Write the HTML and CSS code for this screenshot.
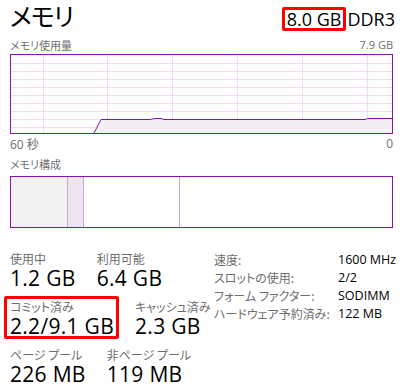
FILE: index.html
```html
<!DOCTYPE html>
<html lang="ja">
<head>
<meta charset="utf-8">
<title>メモリ</title>
<link rel="stylesheet" href="styles.css">
</head>
<body>
<div class="page">
  <div class="head">
    <h1 class="title">メモリ</h1>
    <div class="spec"><span class="mark">8.0 GB</span>DDR3</div>
  </div>

  <div class="axis axis-top"><span class="jp">メモリ使用量</span><span>7.9 GB</span></div>
  <div class="graph">
    <svg width="381" height="78" viewBox="0 0 381 78">
      <g stroke="#eedcf2" stroke-width="1">
        <line x1="0" y1="8.5" x2="381" y2="8.5"/>
        <line x1="0" y1="16.5" x2="381" y2="16.5"/>
        <line x1="0" y1="24.5" x2="381" y2="24.5"/>
        <line x1="0" y1="32.5" x2="381" y2="32.5"/>
        <line x1="0" y1="40.5" x2="381" y2="40.5"/>
        <line x1="0" y1="48.5" x2="381" y2="48.5"/>
        <line x1="0" y1="56.5" x2="381" y2="56.5"/>
        <line x1="0" y1="64.5" x2="381" y2="64.5"/>
        <line x1="0" y1="72.5" x2="381" y2="72.5"/>
        <line x1="32.5" y1="0" x2="32.5" y2="78"/>
        <line x1="96.5" y1="0" x2="96.5" y2="78"/>
        <line x1="161.5" y1="0" x2="161.5" y2="78"/>
        <line x1="226.5" y1="0" x2="226.5" y2="78"/>
        <line x1="291.5" y1="0" x2="291.5" y2="78"/>
        <line x1="356.5" y1="0" x2="356.5" y2="78"/>
      </g>
      <polygon points="83,78 90,64.5 139,64.5 144,63.5 150,63.5 153,64.5 354,64.5 357,63.5 381,63.5 381,78" fill="#f1edf2" fill-opacity="0.85"/>
      <polyline points="83,78 90,64.5 139,64.5 144,63.5 150,63.5 153,64.5 354,64.5 357,63.5 381,63.5" fill="none" stroke="#8b12ae" stroke-width="1"/>
    </svg>
  </div>
  <div class="axis axis-bottom"><span>60 <span class="jp">秒</span></span><span>0</span></div>

  <div class="caption jp">メモリ構成</div>
  <div class="compose">
    <div class="seg seg-use"></div>
    <div class="seg seg-mod"></div>
    <div class="seg seg-standby"></div>
    <div class="seg seg-free"></div>
  </div>

  <div class="stats">
    <div class="figures">
      <div class="row">
        <div class="cell"><div class="label">使用中</div><div class="value">1.2 GB</div></div>
        <div class="cell"><div class="label">利用可能</div><div class="value">6.4 GB</div></div>
      </div>
      <div class="row">
        <div class="cell marked"><div class="label">コミット済み</div><div class="value">2.2/9.1 GB</div></div>
        <div class="cell"><div class="label">キャッシュ済み</div><div class="value">2.3 GB</div></div>
      </div>
      <div class="row">
        <div class="cell"><div class="label">ページ プール</div><div class="value">226 MB</div></div>
        <div class="cell"><div class="label">非ページ プール</div><div class="value">119 MB</div></div>
      </div>
    </div>
    <div class="props">
      <span class="key">速度:</span><span class="val">1600 MHz</span>
      <span class="key">スロットの使用:</span><span class="val">2/2</span>
      <span class="key">フォーム ファクター:</span><span class="val">SODIMM</span>
      <span class="key">ハードウェア予約済み:</span><span class="val">122 MB</span>
    </div>
  </div>
</div>
</body>
</html>
```

FILE: styles.css
```css
body{margin:0; background:#fff; color:#000; font-family:"Open Sans", "Noto Sans CJK JP", sans-serif;}
.jp, .title, .label, .key, .caption{font-family:"Noto Sans CJK JP", sans-serif; font-feature-settings:"palt";}
.page{padding:0 8px 0 10px;}

.head{display:flex; justify-content:space-between; align-items:flex-start; height:37px;}
.title{margin:0; font-size:25px; font-weight:400; line-height:31px; letter-spacing:-1px;}
.spec{margin-top:7px; font-size:18px; line-height:18px; display:flex; align-items:center;}
.mark{border:3px solid #f00; border-radius:2px; padding:0 2px 0 2px; height:18px; margin-right:1px;}

.axis{display:flex; justify-content:space-between; font-size:11px; color:#707070; line-height:16px; padding-right:2px;}
.axis-top{height:17px;}
.axis-bottom{margin-top:2px; font-size:12px;}

.graph{border:1px solid #8b12ae; width:381px; height:78px; line-height:0;}
.graph svg{display:block;}

.caption{font-size:11px; color:#707070; line-height:16px; margin-top:3px; height:20px;}
.compose{border:1px solid #8b12ae; width:381px; height:50px; display:flex;}
.seg{height:100%;}
.seg-use{width:56px; background:#f3f0f4; border-right:1px solid #c9a9d2;}
.seg-mod{width:15px; background:#ede4f1; border-right:1px solid #c9a9d2;}
.seg-standby{width:95px; border-right:1px solid #c9a9d2;}
.seg-free{flex:1;}

.stats{display:flex; margin-top:23px;}
.figures{width:204px; flex:none;}
.row{display:flex; align-items:flex-start; gap:21px; height:48px;}
.cell{position:relative;}
.marked::after{content:""; position:absolute; top:-3px; bottom:-2px; left:-6px; right:-5px; border:3px solid #f00; border-radius:2px;}
.label{font-size:12px; color:#6d6d6d; line-height:16px; white-space:nowrap;}
.value{font-size:21px; line-height:22px; letter-spacing:0.3px; white-space:nowrap;}

.props{flex:1; display:grid; grid-template-columns:124px 1fr; grid-auto-rows:18px; font-size:12px; line-height:18px; align-content:start; white-space:nowrap;}
.key{color:#6d6d6d;}
.val{font-family:"Open Sans", sans-serif; font-size:12.5px;}
```
